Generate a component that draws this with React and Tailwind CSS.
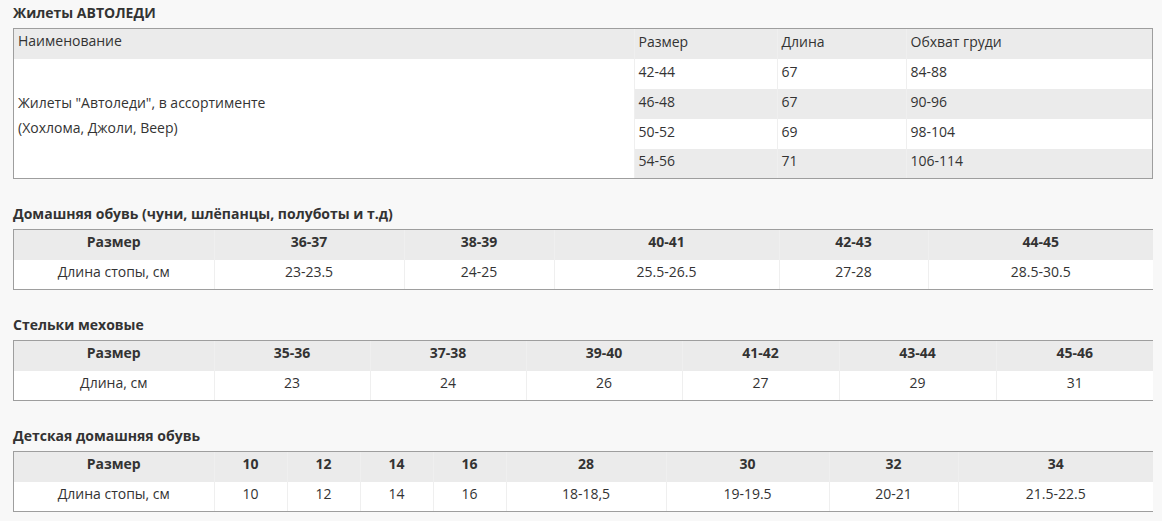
import React from "react";

const B = "border-[#efefef]";

function Title({ children }) {
  return (
    <div className="h-[18px] leading-[18px] text-[14px] font-bold text-[#333] mb-[6px]">
      {children}
    </div>
  );
}

function SimpleTable({ widths, header, row }) {
  return (
    <div className="border border-[#9e9e9e]">
      <table className="w-full border-collapse table-fixed">
        <colgroup>
          {widths.map((w, i) => (
            <col key={i} style={{ width: w }} />
          ))}
        </colgroup>
        <tbody>
          <tr className="bg-[#ebebeb] h-[30px]">
            {header.map((h, i) => (
              <td
                key={i}
                className={`p-0 pb-[6px] leading-[18px] text-center font-bold align-middle ${i > 0 ? `border-l ${B}` : ""}`}
              >
                {h}
              </td>
            ))}
          </tr>
          <tr className="bg-white h-[29px]">
            {row.map((h, i) => (
              <td
                key={i}
                className={`p-0 pb-[5px] leading-[18px] text-center align-middle ${i > 0 ? `border-l ${B}` : ""}`}
              >
                {h}
              </td>
            ))}
          </tr>
        </tbody>
      </table>
    </div>
  );
}

export default function App() {
  const vest = [
    ["42-44", "67", "84-88", "bg-white", "h-[30px]"],
    ["46-48", "67", "90-96", "bg-[#ebebeb]", "h-[30px]"],
    ["50-52", "69", "98-104", "bg-white", "h-[30px]"],
    ["54-56", "71", "106-114", "bg-[#ebebeb]", "h-[29px]"],
  ];
  const c = `p-0 pl-[4px] pb-[5px] leading-[18px] align-middle border-l ${B}`;
  return (
    <div
      className="min-h-[521px] bg-[#f8f8f8] text-[#333] text-[14px] pt-[4px] pl-[13px]"
      style={{ fontFamily: '"Open Sans", "Noto Sans", sans-serif' }}
    >
      <div className="w-[1140px]">
        <Title>Жилеты АВТОЛЕДИ</Title>
        <div className="border border-[#9e9e9e] mb-[26px]">
          <table className="w-full border-collapse table-fixed">
            <colgroup>
              <col style={{ width: 620 }} />
              <col style={{ width: 143 }} />
              <col style={{ width: 129 }} />
              <col />
            </colgroup>
            <tbody>
              <tr className="bg-[#ebebeb] h-[30px]">
                <td className="p-0 pl-[4px] pb-[6px] leading-[18px] align-middle">Наименование</td>
                <td className={c}>Размер</td>
                <td className={c}>Длина</td>
                <td className={c}>Обхват груди</td>
              </tr>
              {vest.map((r, i) => (
                <tr key={i} className={`${r[3]} ${r[4]}`}>
                  {i === 0 && (
                    <td rowSpan={4} className="p-0 pl-[4px] pb-[8px] align-middle bg-white leading-[25px]">
                      <div>Жилеты "Автоледи", в ассортименте</div>
                      <div>(Хохлома, Джоли, Веер)</div>
                    </td>
                  )}
                  <td className={c}>{r[0]}</td>
                  <td className={c}>{r[1]}</td>
                  <td className={c}>{r[2]}</td>
                </tr>
              ))}
            </tbody>
          </table>
        </div>

        <Title>Домашняя обувь (чуни, шлёпанцы, полуботы и т.д)</Title>
        <div className="mb-[26px]">
          <SimpleTable
            widths={[200, 190, 150, 225, 149, 225]}
            header={["Размер", "36-37", "38-39", "40-41", "42-43", "44-45"]}
            row={["Длина стопы, см", "23-23.5", "24-25", "25.5-26.5", "27-28", "28.5-30.5"]}
          />
        </div>

        <Title>Стельки меховые</Title>
        <div className="mb-[26px]">
          <SimpleTable
            widths={[200, 156, 156, 156, 157, 157, 157]}
            header={["Размер", "35-36", "37-38", "39-40", "41-42", "43-44", "45-46"]}
            row={["Длина, см", "23", "24", "26", "27", "29", "31"]}
          />
        </div>

        <Title>Детская домашняя обувь</Title>
        <SimpleTable
          widths={[200, 73, 73, 73, 73, 160, 163, 129, 195]}
          header={["Размер", "10", "12", "14", "16", "28", "30", "32", "34"]}
          row={["Длина стопы, см", "10", "12", "14", "16", "18-18,5", "19-19.5", "20-21", "21.5-22.5"]}
        />
      </div>
    </div>
  );
}
